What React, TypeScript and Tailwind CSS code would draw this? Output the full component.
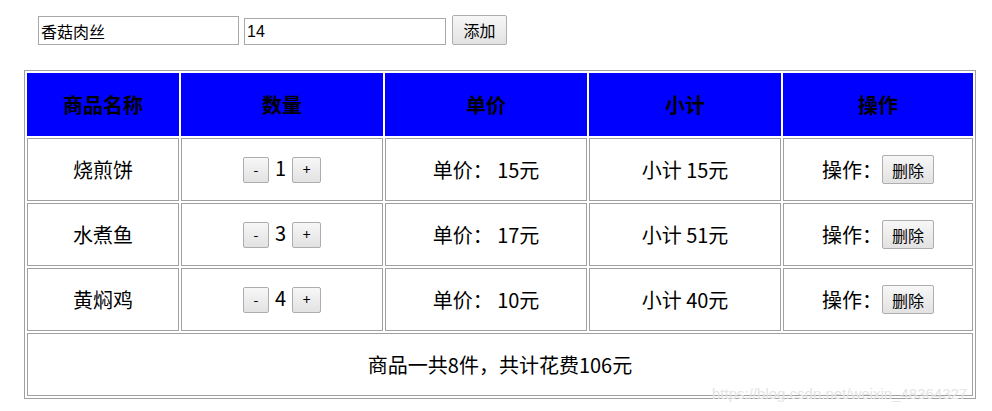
import React, { useState } from 'react';

type Item = { name: string; count: number; price: number };

const btn =
  'inline-flex items-center justify-center border border-[#adadad] rounded-[2px] bg-linear-to-b from-[#f7f7f7] to-[#e2e2e2] text-black';

const App: React.FC = () => {
  const [name, setName] = useState('香菇肉丝');
  const [price, setPrice] = useState('14');
  const [items, setItems] = useState<Item[]>([
    { name: '烧煎饼', count: 1, price: 15 },
    { name: '水煮鱼', count: 3, price: 17 },
    { name: '黄焖鸡', count: 4, price: 10 },
  ]);

  const change = (idx: number, d: number) =>
    setItems(items.map((it, i) => (i === idx ? { ...it, count: Math.max(0, it.count + d) } : it)));

  const remove = (idx: number) => setItems(items.filter((_, i) => i !== idx));

  const add = () => {
    if (!name.trim()) return;
    setItems([...items, { name: name.trim(), count: 1, price: Number(price) || 0 }]);
  };

  const totalCount = items.reduce((s, it) => s + it.count, 0);
  const totalCost = items.reduce((s, it) => s + it.count * it.price, 0);

  return (
    <div className="relative w-[992px] h-[411px] bg-white text-black font-['Microsoft_YaHei','Noto_Sans_CJK_SC',sans-serif]">
      {/* add form */}
      <div className="flex items-end pl-[38px] pt-[15px] h-[45px]">
        <input
          value={name}
          onChange={(e) => setName(e.target.value)}
          className="w-[201px] h-[29px] border border-[#a9a9a9] px-[2px] text-[16px] outline-none"
        />
        <input
          value={price}
          onChange={(e) => setPrice(e.target.value)}
          className="ml-[5px] w-[202px] h-[27px] border border-[#a9a9a9] px-[2px] text-[16px] outline-none font-['Liberation_Sans',sans-serif]"
        />
        <button onClick={add} className={`${btn} ml-[6px] w-[55px] h-[30px] text-[16px]`}>
          添加
        </button>
      </div>

      <table className="ml-[24px] mt-[25px] w-[952px] table-fixed border-separate border-spacing-[2px] border border-[#a0a0a0] text-[20px]">
        <thead>
          <tr>
            <th className="w-[152px] h-[63px] bg-[#0000ff] font-bold">商品名称</th>
            <th className="w-[202px] h-[63px] bg-[#0000ff] font-bold">数量</th>
            <th className="w-[202px] h-[63px] bg-[#0000ff] font-bold">单价</th>
            <th className="w-[192px] h-[63px] bg-[#0000ff] font-bold">小计</th>
            <th className="w-[190px] h-[63px] bg-[#0000ff] font-bold">操作</th>
          </tr>
        </thead>
        <tbody>
          {items.map((it, idx) => (
            <tr key={idx}>
              <td className="h-[63px] border border-[#a0a0a0] text-center">{it.name}</td>
              <td className="h-[63px] border border-[#a0a0a0] text-center">
                <div className="flex items-center justify-center">
                  <button onClick={() => change(idx, -1)} className={`${btn} w-[26px] h-[26px] text-[14px]`}>
                    -
                  </button>
                  <span className="mx-[6px] leading-none -mt-[4px]">{it.count}</span>
                  <button onClick={() => change(idx, 1)} className={`${btn} w-[29px] h-[26px] text-[14px]`}>
                    +
                  </button>
                </div>
              </td>
              <td className="h-[63px] border border-[#a0a0a0] text-center whitespace-pre">单价： {it.price}元</td>
              <td className="h-[63px] border border-[#a0a0a0] text-center">小计 {it.count * it.price}元</td>
              <td className="h-[63px] border border-[#a0a0a0] text-center">
                <div className="flex items-center justify-center">
                  <span>操作：</span>
                  <button onClick={() => remove(idx)} className={`${btn} w-[52px] h-[29px] text-[16px]`}>
                    删除
                  </button>
                </div>
              </td>
            </tr>
          ))}
          <tr>
            <td colSpan={5} className="h-[63px] border border-[#a0a0a0] text-center">
              商品一共{totalCount}件，共计花费{totalCost}元
            </td>
          </tr>
        </tbody>
      </table>

      {/* watermark */}
      <div className="absolute left-[712px] top-[383px] text-[15px] text-[#e4e4e4] font-['Liberation_Sans',sans-serif] pointer-events-none">
        https://blog.csdn.net/weixin_48364327
      </div>
    </div>
  );
};

export default App;
